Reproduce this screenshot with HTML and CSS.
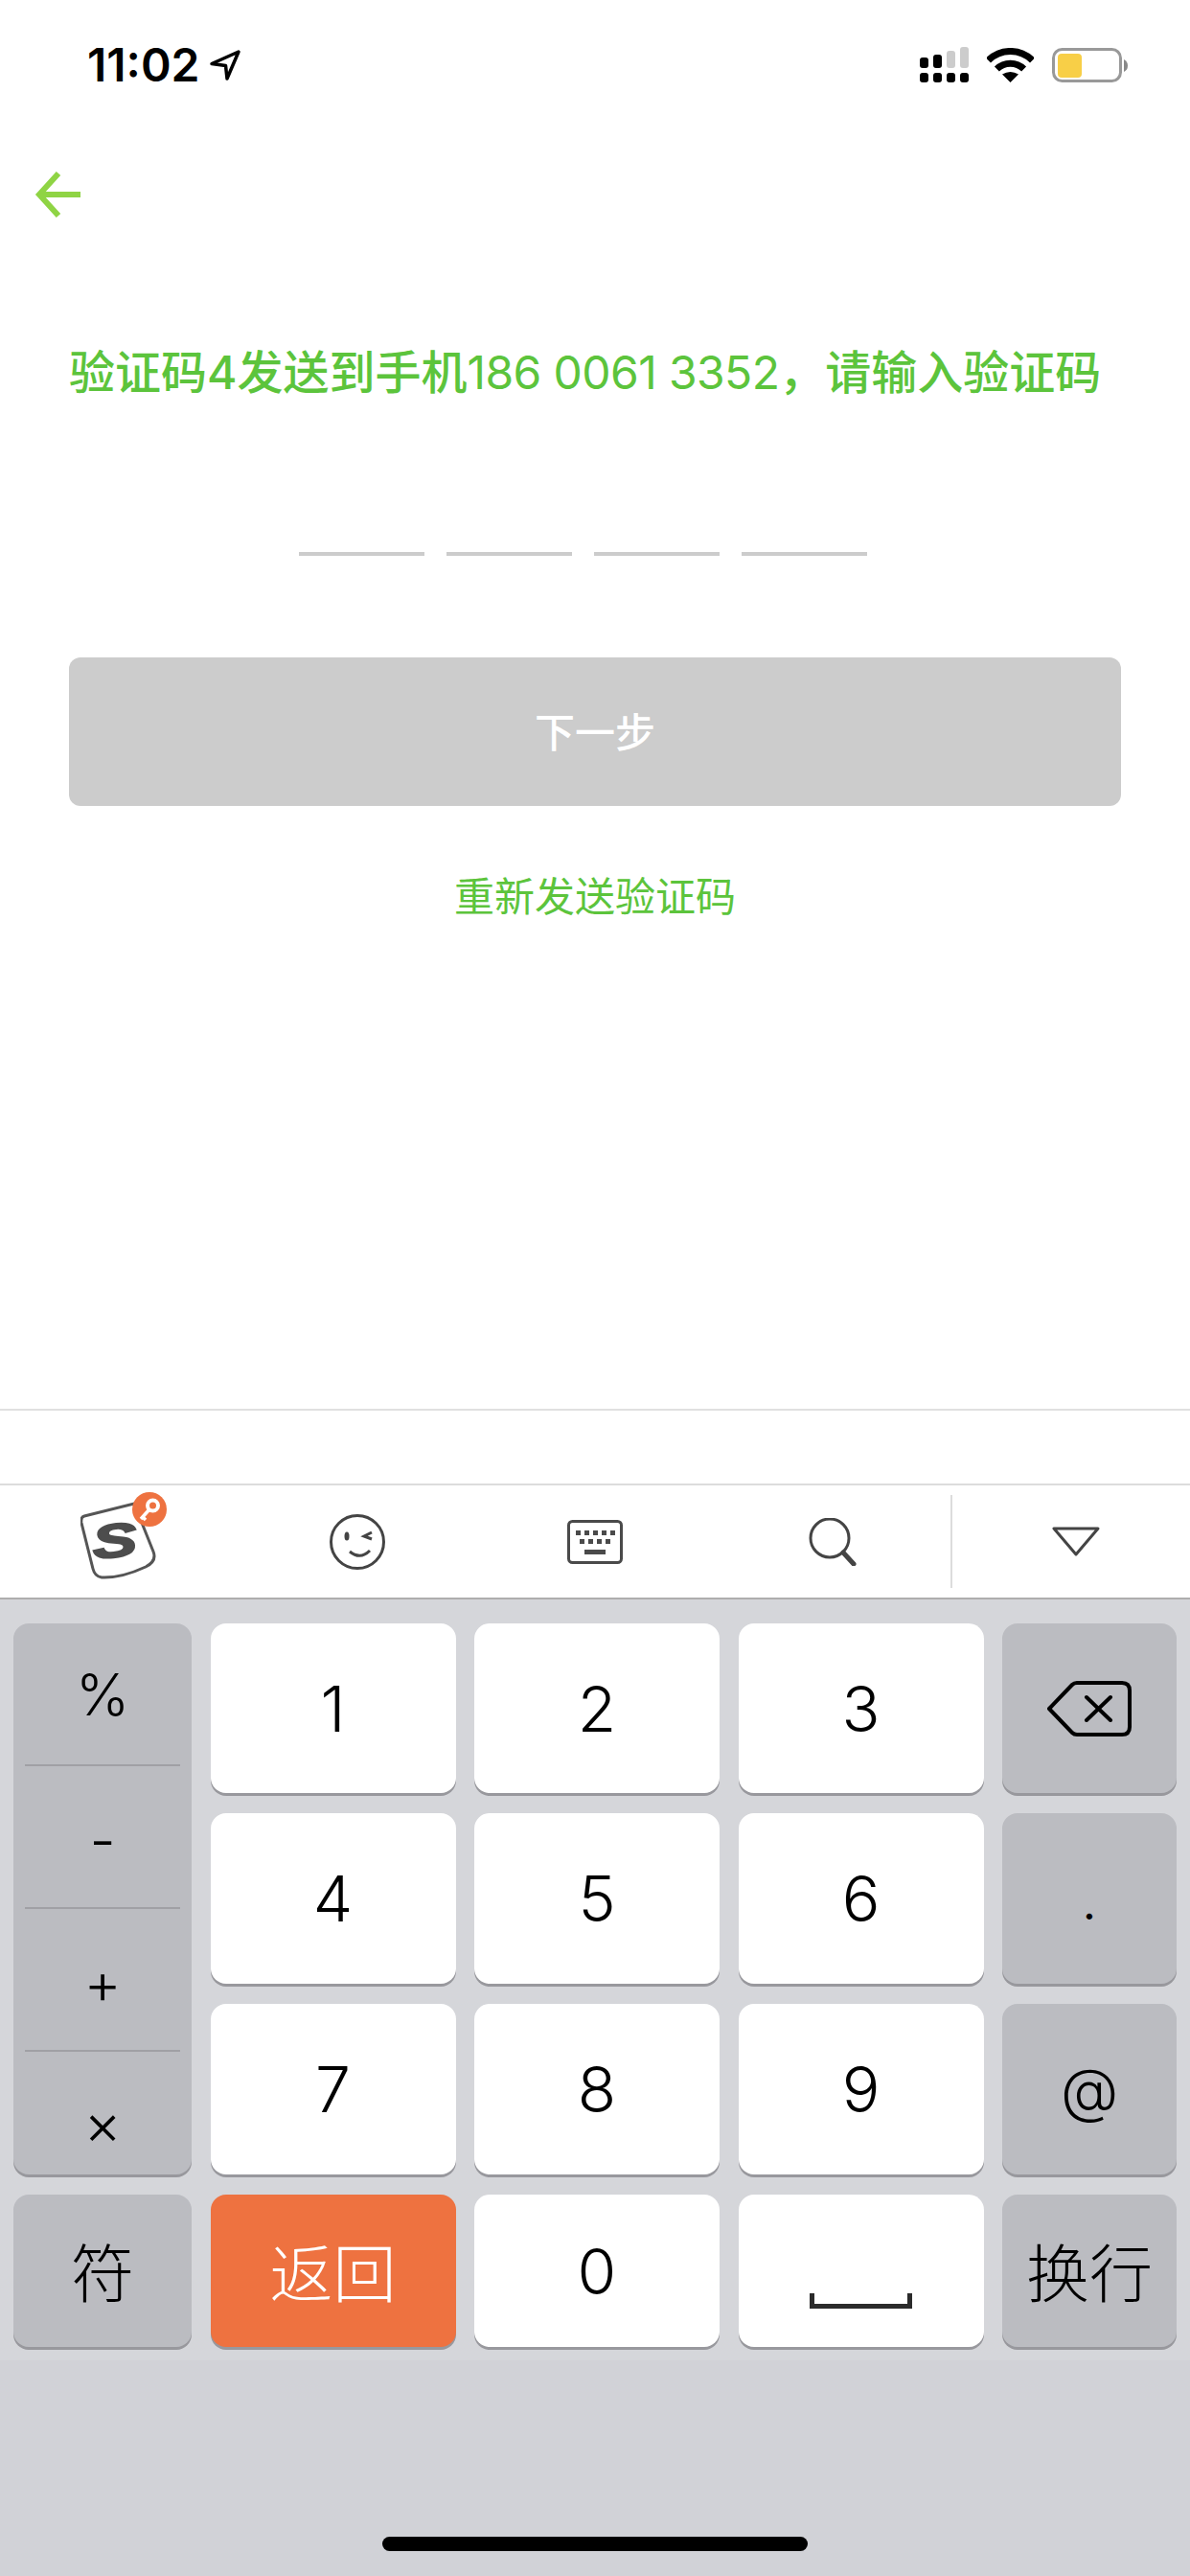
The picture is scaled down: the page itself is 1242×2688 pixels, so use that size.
FILE: index.html
```html
<!DOCTYPE html>
<html lang="zh-CN">
<head>
    <meta charset="UTF-8">
    <meta name="viewport" content="width=device-width, initial-scale=1.0">
    <title>验证码</title>
    <link rel="stylesheet" href="styles.css">
</head>
<body>
    <header class="status">
        <span class="time">11:02</span>
        <svg class="loc" width="34" height="34" viewBox="0 0 34 34"><path d="M31 3 L3 15.500 L17.500 17.500 L19 31 Z" fill="#fff" stroke="#000" stroke-width="3.500" stroke-linejoin="round"/></svg>
        <div class="status-right">
            <svg width="51" height="37" viewBox="0 0 51 37">
                <rect x="0" y="27" width="9" height="10" rx="3"/><rect x="14" y="27" width="9" height="10" rx="3"/><rect x="28" y="27" width="9" height="10" rx="3"/><rect x="42" y="27" width="9" height="10" rx="3"/>
                <rect x="0" y="11" width="9" height="11" rx="3"/><rect x="14" y="8" width="9" height="14" rx="3"/>
                <rect x="28" y="4" width="9" height="18" rx="3" fill="#ccc"/><rect x="42" y="0" width="9" height="22" rx="3" fill="#ccc"/>
            </svg>
            <svg width="49" height="36" viewBox="0 0 49 36">
                <path d="M1.500 13 A32.500 32.500 0 0 1 47.500 13" fill="none" stroke="#000" stroke-width="7"/>
                <path d="M10.400 22 A20 20 0 0 1 38.600 22" fill="none" stroke="#000" stroke-width="7"/>
                <path d="M24.500 36 L16 27.500 Q24.500 22.500 33 27.500 Z"/>
            </svg>
            <svg width="79" height="36" viewBox="0 0 79 36">
                <rect x="1.500" y="1.500" width="70" height="33" rx="9" fill="#fff" stroke="#999" stroke-width="3"/>
                <rect x="6" y="6" width="25" height="25" rx="4" fill="#f8cf47"/>
                <path d="M75 12 Q79 14 79 18.500 Q79 23 75 25 Z" fill="#888"/>
            </svg>
        </div>
    </header>

    <nav class="nav">
        <svg width="48" height="48" viewBox="0 0 48 48" fill="none" stroke="#8fd444" stroke-width="6"><path d="M48 24 H5"/><path d="M25 2 L5 24 L25 46"/></svg>
    </nav>

    <main class="content">
        <h1 class="title">验证码4发送到手机<span class="phone">186 0061 3352</span>，请输入验证码</h1>
        <div class="code">
            <span></span><span></span><span></span><span></span>
        </div>
        <button class="next">下一步</button>
        <a class="resend">重新发送验证码</a>
    </main>

    <div class="candidates"></div>

    <div class="toolbar">
        <div class="tool">
            <svg class="logo" width="92" height="92" viewBox="0 0 92 92">
                <path d="M4 25 L56 12 L76 62 Q80 72 68 78 Q42 90 22 89 Q15 88 13 80 L1 32 Q0 26 4 25 Z" fill="#fff" stroke="#555" stroke-width="3"/>
                <text class="logo-s" x="0" y="0" transform="translate(14 70) rotate(-6) scale(1.350 0.950)">S</text>
                <ellipse cx="72" cy="18" rx="18" ry="18" fill="#ee7240"/>
                <circle cx="75.500" cy="14" r="5.500" fill="none" stroke="#fff" stroke-width="4"/>
                <path d="M72 18 L63 28 M65 26 L68 29" fill="none" stroke="#fff" stroke-width="3.500"/>
            </svg>
        </div>
        <div class="tool">
            <svg width="58" height="58" viewBox="0 0 58 58" fill="none" stroke="#444" stroke-width="3">
                <ellipse cx="29" cy="29" rx="27.500" ry="27.500"/>
                <ellipse cx="18" cy="23" rx="2.500" ry="4.500" fill="#444" stroke="none"/>
                <path d="M44 19 L36 23 L44 26" stroke-width="3"/>
                <path d="M21 39 Q32 48 42 38"/>
            </svg>
        </div>
        <div class="tool">
            <svg width="58" height="46" viewBox="0 0 58 46" fill="#4a4a4a">
                <rect x="1.500" y="1.500" width="55" height="43" rx="4" fill="none" stroke="#4a4a4a" stroke-width="3"/>
                <rect x="9" y="11" width="5" height="5"/><rect x="18" y="11" width="5" height="5"/><rect x="27" y="11" width="5" height="5"/><rect x="36" y="11" width="5" height="5"/><rect x="45" y="11" width="5" height="5"/>
                <rect x="13" y="20" width="5" height="5"/><rect x="22" y="20" width="5" height="5"/><rect x="31" y="20" width="5" height="5"/><rect x="40" y="20" width="5" height="5"/>
                <rect x="18" y="31" width="22" height="5"/>
            </svg>
        </div>
        <div class="tool">
            <svg width="50" height="50" viewBox="0 0 50 50" fill="none" stroke="#444">
                <circle cx="22" cy="21" r="20" stroke-width="3"/>
                <path d="M36 36 L47 48" stroke-width="5" stroke-linecap="round"/>
            </svg>
        </div>
        <div class="tool tool-hide">
            <svg class="hide-icon" width="52" height="31" viewBox="0 0 52 31" fill="none" stroke="#444" stroke-width="3" stroke-linejoin="round"><path d="M3 2 H49 L26 29 Z"/></svg>
        </div>
    </div>

    <section class="keyboard">
        <div class="key key-gray key-symbols">
            <span class="sym sym-percent">%</span>
            <span class="sym sym-minus">-</span>
            <span class="sym sym-plus">+</span>
            <span class="sym sym-times">×</span>
        </div>
        <div class="key">1</div>
        <div class="key">2</div>
        <div class="key">3</div>
        <div class="key key-gray">
            <svg width="88" height="58" viewBox="0 0 88 58" fill="none" stroke="#000" stroke-width="4" stroke-linejoin="round" stroke-linecap="round">
                <path d="M2 29 L26 4 Q28 2 31 2 H78 Q86 2 86 10 V48 Q86 56 78 56 H31 Q28 56 26 54 Z"/>
                <path d="M41 17 L66 41 M66 17 L41 41"/>
            </svg>
        </div>
        <div class="key">4</div>
        <div class="key">5</div>
        <div class="key">6</div>
        <div class="key key-gray key-dot">.</div>
        <div class="key">7</div>
        <div class="key">8</div>
        <div class="key">9</div>
        <div class="key key-gray key-at">@</div>
        <div class="key key-gray key-cjk">符</div>
        <div class="key key-orange key-cjk">返回</div>
        <div class="key">0</div>
        <div class="key"><span class="space-mark"></span></div>
        <div class="key key-gray key-cjk">换行</div>
    </section>

    <footer class="home">
        <span class="home-bar"></span>
    </footer>
</body>
</html>
```

FILE: styles.css
```css
* {
    box-sizing: border-box;
}
body {
    margin: 0;
    width: 1242px;
    height: 2688px;
    overflow: hidden;
    display: flex;
    flex-direction: column;
    background: #fff;
    font-family: Inter, "Noto Sans CJK SC", sans-serif;
}
.status {
    height: 135px;
    flex: none;
    display: flex;
    align-items: center;
    padding: 0 65px 0 91px;
}
.time {
    font-size: 48px;
    font-weight: 600;
    color: #000;
}
.loc {
    margin-left: 10px;
}
.status-right {
    margin-left: auto;
    display: flex;
    align-items: center;
    gap: 19px;
}
.nav {
    flex: none;
    height: 92px;
    padding: 44px 0 0 36px;
}
.nav svg {
    display: block;
}
.content {
    flex: 1;
    display: flex;
    flex-direction: column;
    padding: 132px 72px 0;
}
.title {
    margin: 0;
    font-size: 48px;
    line-height: 60px;
    font-weight: 500;
    color: #5cc43c;
    white-space: nowrap;
}
.phone {
    font-weight: 400;
    letter-spacing: -0.600px;
}
.code {
    display: flex;
    gap: 23px;
    margin-top: 157px;
    padding-left: 240px;
}
.code span {
    width: 131px;
    height: 4px;
    background: #ccc;
}
.next {
    flex: none;
    margin-top: 106px;
    height: 155px;
    border: none;
    border-radius: 12px;
    background: #ccc;
    color: #fff;
    font-family: inherit;
    font-size: 42px;
    font-weight: 500;
    padding: 0 0 5px;
}
.resend {
    margin-top: 65px;
    font-size: 42px;
    line-height: 60px;
    text-align: center;
    color: #5cc43c;
}
.candidates {
    flex: none;
    height: 78px;
    border-top: 2px solid #e0e0e0;
}
.toolbar {
    flex: none;
    height: 121px;
    display: grid;
    grid-template-columns: repeat(5, 1fr);
    border-top: 2px solid #dcdcdc;
    border-bottom: 2px solid #aeaeae;
}
.tool {
    display: flex;
    align-items: center;
    justify-content: center;
}
.logo {
    margin: 0 0 12px 12px;
}
.logo-s {
    font-family: "Liberation Sans", sans-serif;
    font-size: 52px;
    font-weight: 700;
    font-style: italic;
    fill: #4d4d4d;
    stroke: #4d4d4d;
    stroke-width: 2px;
}
.tool-hide {
    position: relative;
}
.tool-hide::before {
    content: "";
    position: absolute;
    left: -2px;
    top: 10px;
    bottom: 10px;
    border-left: 2px solid #dcdcdc;
}
.hide-icon {
    margin-left: 10px;
}
.keyboard {
    flex: none;
    display: grid;
    grid-template-columns: 186px 256px 256px 256px 182px;
    grid-template-rows: 177px 178px 178px 159px;
    column-gap: 19.500px;
    row-gap: 21px;
    padding: 25px 0 14px 14px;
    background: #d5d6da;
}
.key {
    display: flex;
    align-items: center;
    justify-content: center;
    border-radius: 16px;
    background: #fff;
    box-shadow: 0 3px 0 #98989d;
    color: #000;
    font-size: 66px;
    font-weight: 275;
}
.key-gray {
    background: #bbbcc1;
}
.key-orange {
    background: #ee7240;
    color: #fff;
}
.key-cjk {
    font-family: "Noto Sans CJK SC", sans-serif;
    font-weight: 300;
    padding-bottom: 3px;
}
.key-dot {
    padding-top: 8px;
    font-size: 48px;
    font-weight: 400;
}
.key-at {
    font-size: 62px;
}
.key-symbols {
    grid-row: span 3;
    flex-direction: column;
    align-items: stretch;
    justify-content: flex-start;
    padding: 0 12px;
    font-size: 60px;
}
.sym {
    display: flex;
    align-items: center;
    justify-content: center;
    height: 149px;
    border-bottom: 2px solid #a0a0a5;
    font-weight: 320;
}
.sym-minus {
    padding-top: 6px;
}
.sym-plus {
    padding-top: 6px;
}
.sym-times {
    flex: 1;
    padding-top: 22px;
    border-bottom: none;
}
.space-mark {
    width: 107px;
    height: 16px;
    margin-top: 62px;
    border: 5px solid #2b2b2b;
    border-top: none;
}
.home {
    flex: none;
    height: 225px;
    display: flex;
    justify-content: center;
    padding-top: 184px;
    background: #d1d2d7;
}
.home-bar {
    width: 444px;
    height: 15px;
    border-radius: 8px;
    background: #000;
}
```
